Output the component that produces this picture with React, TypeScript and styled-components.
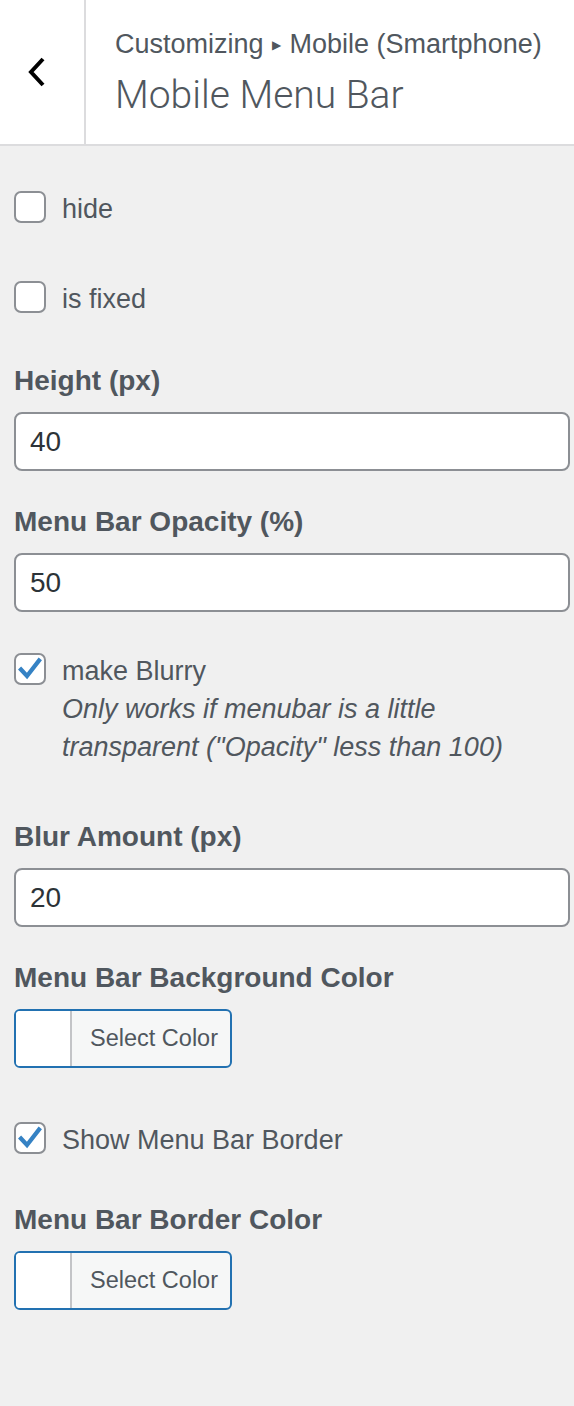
import React from "react";
import styled, { createGlobalStyle } from "styled-components";

const GlobalStyle = createGlobalStyle`
  html, body {
    margin: 0;
    padding: 0;
    background: #f0f0f0;
  }
  body {
    font-family: "Liberation Sans", Arial, sans-serif;
    color: #50575e;
  }
`;

const Page = styled.div`
  width: 574px;
  min-height: 1406px;
  background: #f0f0f0;
`;

const Header = styled.header`
  display: flex;
  height: 144px;
  background: #fff;
  border-bottom: 2px solid #dcdcde;
`;

const BackButton = styled.button`
  width: 86px;
  flex: none;
  display: flex;
  align-items: center;
  justify-content: center;
  padding: 0 10px 0 0;
  background: #fff;
  border: none;
  border-right: 2px solid #dcdcde;
  cursor: pointer;
`;

const HeaderText = styled.div`
  padding: 29px 0 0 29px;
`;

const Crumb = styled.div`
  font-size: 27px;
  line-height: 30px;
  color: #50575e;
  white-space: nowrap;
`;

const Arrow = styled.span`
  font-size: 12px;
  vertical-align: 4px;
  padding: 0 9px 0 8px;
`;

const Title = styled.h1`
  margin: 11px 0 0;
  font-family: Roboto, "Liberation Sans", sans-serif;
  font-weight: 300;
  font-size: 39px;
  line-height: 48px;
  color: #50575e;
`;

const Body = styled.div`
  padding: 0 4px 40px 14px;
`;

const CheckRow = styled.label<{ $gap: number }>`
  display: flex;
  align-items: center;
  gap: 16px;
  height: 32px;
  margin-top: ${(p) => p.$gap}px;
  font-size: 27px;
  color: #50575e;
`;

const CheckText = styled.span`
  line-height: 26px;
  padding-top: 4px;
`;

const Box = styled.span`
  width: 32px;
  height: 32px;
  flex: none;
  box-sizing: border-box;
  border: 2px solid #8c8f94;
  border-radius: 7px;
  background: #fff;
  display: flex;
  align-items: center;
  justify-content: center;
`;

const Description = styled.p`
  max-width: 462px;
  margin: 5px 0 0 48px;
  font-size: 27px;
  line-height: 38px;
  font-style: italic;
  color: #50575e;
`;

const FieldLabel = styled.div<{ $gap: number }>`
  margin-top: ${(p) => p.$gap}px;
  font-size: 28px;
  line-height: 40px;
  font-weight: 700;
  color: #50575e;
`;

const TextInput = styled.input`
  display: block;
  box-sizing: border-box;
  width: 556px;
  height: 59px;
  margin-top: 11px;
  padding: 0 14px;
  border: 2px solid #8c8f94;
  border-radius: 8px;
  background: #fff;
  font-family: "Liberation Sans", Arial, sans-serif;
  font-size: 28px;
  color: #2c3338;
  outline: none;
`;

const ColorButton = styled.button`
  display: flex;
  box-sizing: border-box;
  width: 218px;
  height: 59px;
  margin-top: 11px;
  padding: 0;
  border: 2px solid #2271b1;
  border-radius: 6px;
  overflow: hidden;
  background: #f6f7f7;
  cursor: pointer;
`;

const Swatch = styled.span`
  width: 54px;
  flex: none;
  background: #fff;
  border-right: 2px solid #c3c4c7;
`;

const ColorText = styled.span`
  flex: 1;
  display: flex;
  align-items: center;
  padding-left: 18px;
  font-family: "Liberation Sans", Arial, sans-serif;
  font-size: 23.5px;
  color: #50575e;
  white-space: nowrap;
`;

const Check = () => (
  <svg width="26" height="26" viewBox="0 0 26 26">
    <path
      d="M4 13.5 L10 20 L22 4.5"
      fill="none"
      stroke="#3582c4"
      strokeWidth="4.2"
      strokeLinecap="square"
      strokeLinejoin="miter"
    />
  </svg>
);

const Checkbox = ({ gap, on, children }: { gap: number; on?: boolean; children: React.ReactNode }) => (
  <CheckRow $gap={gap}>
    <Box>{on && <Check />}</Box>
    <CheckText>{children}</CheckText>
  </CheckRow>
);

const ColorPicker = () => (
  <ColorButton type="button">
    <Swatch />
    <ColorText>Select Color</ColorText>
  </ColorButton>
);

export default function App() {
  return (
    <Page>
      <GlobalStyle />
      <Header>
        <BackButton aria-label="Back">
          <svg width="20" height="30" viewBox="0 0 20 30">
            <path d="M16 2 L4 15 L16 28" fill="none" stroke="#000" strokeWidth="4" />
          </svg>
        </BackButton>
        <HeaderText>
          <Crumb>
            Customizing<Arrow>▶</Arrow>Mobile (Smartphone)
          </Crumb>
          <Title>Mobile Menu Bar</Title>
        </HeaderText>
      </Header>
      <Body>
        <Checkbox gap={45}>hide</Checkbox>
        <Checkbox gap={58}>is fixed</Checkbox>

        <FieldLabel $gap={48}>Height (px)</FieldLabel>
        <TextInput defaultValue="40" />

        <FieldLabel $gap={31}>Menu Bar Opacity (%)</FieldLabel>
        <TextInput defaultValue="50" />

        <Checkbox gap={41} on>
          make Blurry
        </Checkbox>
        <Description>
          Only works if menubar is a little transparent ("Opacity" less than 100)
        </Description>

        <FieldLabel $gap={51}>Blur Amount (px)</FieldLabel>
        <TextInput defaultValue="20" />

        <FieldLabel $gap={31}>Menu Bar Background Color</FieldLabel>
        <ColorPicker />

        <Checkbox gap={54} on>
          Show Menu Bar Border
        </Checkbox>

        <FieldLabel $gap={46}>Menu Bar Border Color</FieldLabel>
        <ColorPicker />
      </Body>
    </Page>
  );
}
